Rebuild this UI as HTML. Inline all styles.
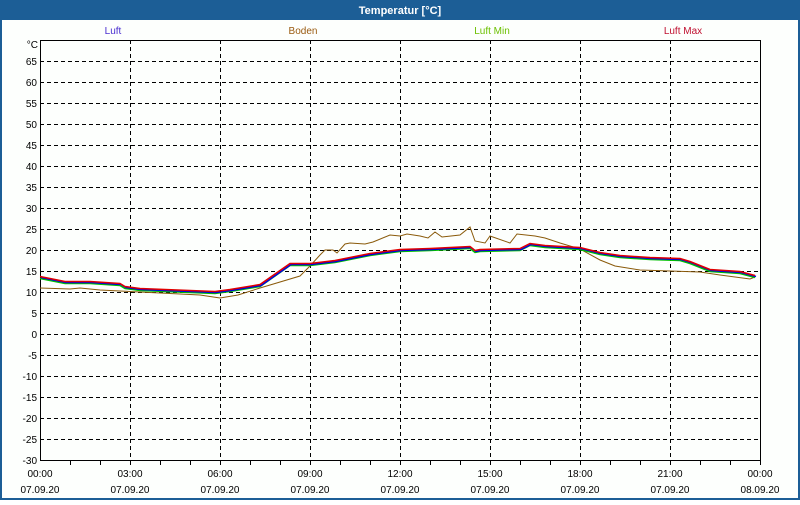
<!DOCTYPE html>
<html><head><style>
body{margin:0;width:800px;height:500px;overflow:hidden;font-family:"Liberation Sans",sans-serif;}
</style></head><body>
<svg width="800" height="500" xmlns="http://www.w3.org/2000/svg" font-family="Liberation Sans, sans-serif" font-size="11">
<rect x="0" y="0" width="800" height="500" fill="#1c5e96"/>
<rect x="2" y="20" width="796" height="478" fill="#fdfffd"/>
<text x="400" y="14" fill="#fff" font-weight="bold" text-anchor="middle" font-size="11">Temperatur [°C]</text>
<g text-anchor="middle" font-size="10">
<text x="113" y="34" fill="#4a2fd0">Luft</text>
<text x="303" y="34" fill="#9a5a10">Boden</text>
<text x="492" y="34" fill="#6cc000">Luft Min</text>
<text x="683" y="34" fill="#c01030">Luft Max</text>
</g>
<g stroke="#000" stroke-dasharray="4,3" stroke-width="1">
<path d="M40 61.5H760M40 82.5H760M40 103.5H760M40 124.5H760M40 145.5H760M40 166.5H760M40 187.5H760M40 208.5H760M40 229.5H760M40 250.5H760M40 271.5H760M40 292.5H760M40 313.5H760M40 334.5H760M40 355.5H760M40 376.5H760M40 397.5H760M40 418.5H760M40 439.5H760"/>
<path d="M130.5 40V460M220.5 40V460M310.5 40V460M400.5 40V460M490.5 40V460M580.5 40V460M670.5 40V460"/>
</g>
<rect x="40.5" y="40.5" width="720" height="420" fill="none" stroke="#000"/>
<g stroke="#000"><path d="M70.5 461v4M100.5 461v4M130.5 461v4M160.5 461v4M190.5 461v4M220.5 461v4M250.5 461v4M280.5 461v4M310.5 461v4M340.5 461v4M370.5 461v4M400.5 461v4M430.5 461v4M460.5 461v4M490.5 461v4M520.5 461v4M550.5 461v4M580.5 461v4M610.5 461v4M640.5 461v4M670.5 461v4M700.5 461v4M730.5 461v4M760.5 461v4"/></g>
<g text-anchor="end" font-size="10" fill="#000">
<text x="38" y="48">°C</text>
<text x="37" y="65">65</text><text x="37" y="86">60</text><text x="37" y="107">55</text><text x="37" y="128">50</text><text x="37" y="149">45</text><text x="37" y="170">40</text><text x="37" y="191">35</text><text x="37" y="212">30</text><text x="37" y="233">25</text><text x="37" y="254">20</text><text x="37" y="275">15</text><text x="37" y="296">10</text><text x="37" y="317">5</text><text x="37" y="338">0</text><text x="37" y="359">-5</text><text x="37" y="380">-10</text><text x="37" y="401">-15</text><text x="37" y="422">-20</text><text x="37" y="443">-25</text><text x="37" y="464">-30</text>
</g>
<g text-anchor="middle" font-size="10" fill="#000">
<text x="40" y="477">00:00</text><text x="130" y="477">03:00</text><text x="220" y="477">06:00</text><text x="310" y="477">09:00</text><text x="400" y="477">12:00</text><text x="490" y="477">15:00</text><text x="580" y="477">18:00</text><text x="670" y="477">21:00</text><text x="760" y="477">00:00</text>
<text x="40" y="493">07.09.20</text><text x="130" y="493">07.09.20</text><text x="220" y="493">07.09.20</text><text x="310" y="493">07.09.20</text><text x="400" y="493">07.09.20</text><text x="490" y="493">07.09.20</text><text x="580" y="493">07.09.20</text><text x="670" y="493">07.09.20</text><text x="760" y="493">08.09.20</text>
</g>
<g fill="none" stroke-width="1">
<polyline stroke="#8a5a0a" points="40,288 70,289 80,288 100,290 120,291 160,293 200,295 220,298 238,295 260,288 300,276 310,266 320,255 325,250 333,250 337,253 345,244 350,243 365,244 373,242 390,235 400,236 407,234 420,236 428,238 435,232 442,237 460,235 470,227 475,241 485,243 490,236 510,243 517,234 535,236 545,238 560,243 580,249 600,260 615,266 640,270 670,271 700,272 720,275 750,279 755,277"/>
<polyline stroke="#00c000" stroke-width="1.5" transform="translate(0,1.5)" points="40,277 50,279 65,282 90,282 120,284 125,287 140,289 190,291 215,292 230,290 260,285 290,264 310,264 335,261 345,259 370,254 400,250 430,249 470,247 475,251 480,250 520,249 530,244 545,246 580,248 600,253 620,256 650,258 680,259 690,262 710,270 740,272 755,276"/>
<polyline stroke="#0000e0" stroke-width="1.5" transform="translate(1,0.5)" points="40,277 50,279 65,282 90,282 120,284 125,287 140,289 190,291 215,292 230,290 260,285 290,264 310,264 335,261 345,259 370,254 400,250 430,249 470,247 475,251 480,250 520,249 530,244 545,246 580,248 600,253 620,256 650,258 680,259 690,262 710,270 740,272 755,276"/>
<polyline stroke="#e00000" stroke-width="1.5" transform="translate(0,-0.5)" points="40,277 50,279 65,282 90,282 120,284 125,287 140,289 190,291 215,292 230,290 260,285 290,264 310,264 335,261 345,259 370,254 400,250 430,249 470,247 475,251 480,250 520,249 530,244 545,246 580,248 600,253 620,256 650,258 680,259 690,262 710,270 740,272 755,276"/>
</g>
</svg>
</body></html>
